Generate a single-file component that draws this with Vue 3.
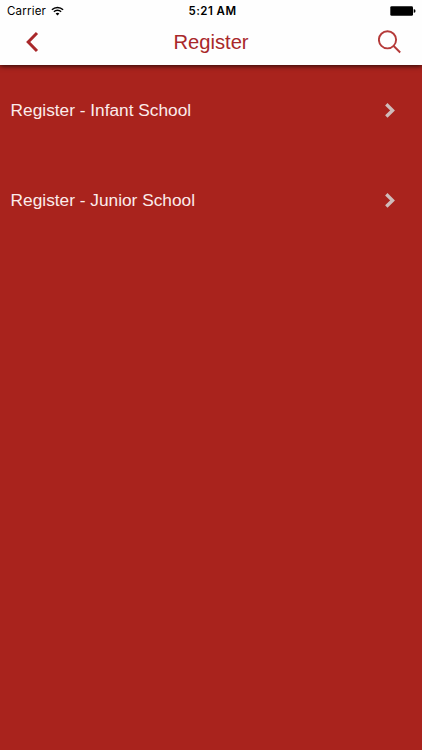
<template>
  <div class="screen">
    <header class="header">
      <div class="status-bar">
        <div class="status-left">
          <span class="carrier">Carrier</span>
          <svg class="wifi" width="13" height="10" viewBox="0 0 13 10">
            <path d="M0.9 3.7a8 8 0 0 1 11.2 0" />
            <path d="M2.9 5.8a5.1 5.1 0 0 1 7.2 0" />
            <path class="wifi-dot" d="M6.5 9.5L4.6 7.6a2.7 2.7 0 0 1 3.8 0z" />
          </svg>
        </div>
        <span class="time">{{ time }}</span>
        <div class="status-right">
          <svg width="26" height="10" viewBox="0 0 26 10">
            <rect x="0.3" y="0.2" width="22.7" height="9.6" rx="1.4" />
            <path d="M23.7 3.2h0.5a1.3 1.8 0 0 1 0 3.6h-0.5z" />
          </svg>
        </div>
      </div>

      <nav class="nav-bar">
        <button class="nav-button back" aria-label="Back">
          <svg width="14" height="22" viewBox="0 0 14 22">
            <path d="M12 2L3.2 11L12 20" />
          </svg>
        </button>
        <h1 class="title">Register</h1>
        <button class="nav-button search" aria-label="Search">
          <svg width="24" height="24" viewBox="0 0 24 24">
            <circle cx="9.5" cy="9.8" r="8.6" />
            <path d="M15.7 16L22.2 22.5" />
          </svg>
        </button>
      </nav>
    </header>

    <main class="list">
      <button v-for="item in items" :key="item" class="list-item">
        <span class="label">{{ item }}</span>
        <svg class="chevron" width="12" height="16" viewBox="0 0 12 16">
          <path d="M2.3 2.3L8.5 8.4L2.3 14.5" />
        </svg>
      </button>
    </main>
  </div>
</template>

<script setup>
import { ref } from 'vue'

const time = ref('5:21 AM')

const items = ref([
  'Register - Infant School',
  'Register - Junior School'
])
</script>

<style>
body {
  margin: 0;
  background: #a9231d;
}
</style>

<style scoped>
.screen {
  min-height: 100vh;
  background: #a9231d;
  font-family: 'Liberation Sans', Arial, sans-serif;
}

.header {
  position: relative;
  height: 65px;
  background: #fefefe;
  box-shadow: 0 1px 5px rgba(0, 0, 0, 0.8);
}

.status-bar {
  display: grid;
  grid-template-columns: 1fr auto 1fr;
  align-items: center;
  height: 22px;
  padding: 0 6px 0 7px;
  color: #000;
  font-family: Inter, sans-serif;
  font-size: 11.5px;
}

.status-left {
  display: flex;
  align-items: center;
  gap: 5px;
}

.carrier {
  letter-spacing: 0.2px;
}

.wifi path {
  fill: none;
  stroke: #000;
  stroke-width: 1.5;
}

.wifi .wifi-dot {
  fill: #000;
  stroke: none;
}

.time {
  font-weight: 600;
  letter-spacing: 0.45px;
  padding-left: 2px;
}

.status-right {
  display: flex;
  justify-content: flex-end;
}

.nav-bar {
  display: grid;
  grid-template-columns: 64px 1fr 64px;
  align-items: center;
  height: 40px;
}

.nav-button {
  display: flex;
  justify-content: center;
  padding: 0;
  border: none;
  background: none;
  cursor: pointer;
}

.nav-button svg {
  fill: none;
  stroke: #a9282a;
}

.back svg {
  stroke-width: 3;
}

.search svg {
  stroke: #b53a39;
  stroke-width: 1.9;
}

.title {
  margin: 0;
  color: #a9282a;
  font-size: 20.2px;
  font-weight: 400;
  line-height: 24px;
  text-align: center;
}

.list-item {
  display: flex;
  align-items: center;
  justify-content: space-between;
  width: 100%;
  height: 90px;
  padding: 0 26px 0 10.6px;
  border: none;
  background: none;
  color: #fbeceb;
  font-family: inherit;
  font-size: 17.3px;
  text-align: left;
  cursor: pointer;
}

.chevron {
  fill: none;
  stroke: #cfbcbb;
  stroke-width: 3.4;
}
</style>
